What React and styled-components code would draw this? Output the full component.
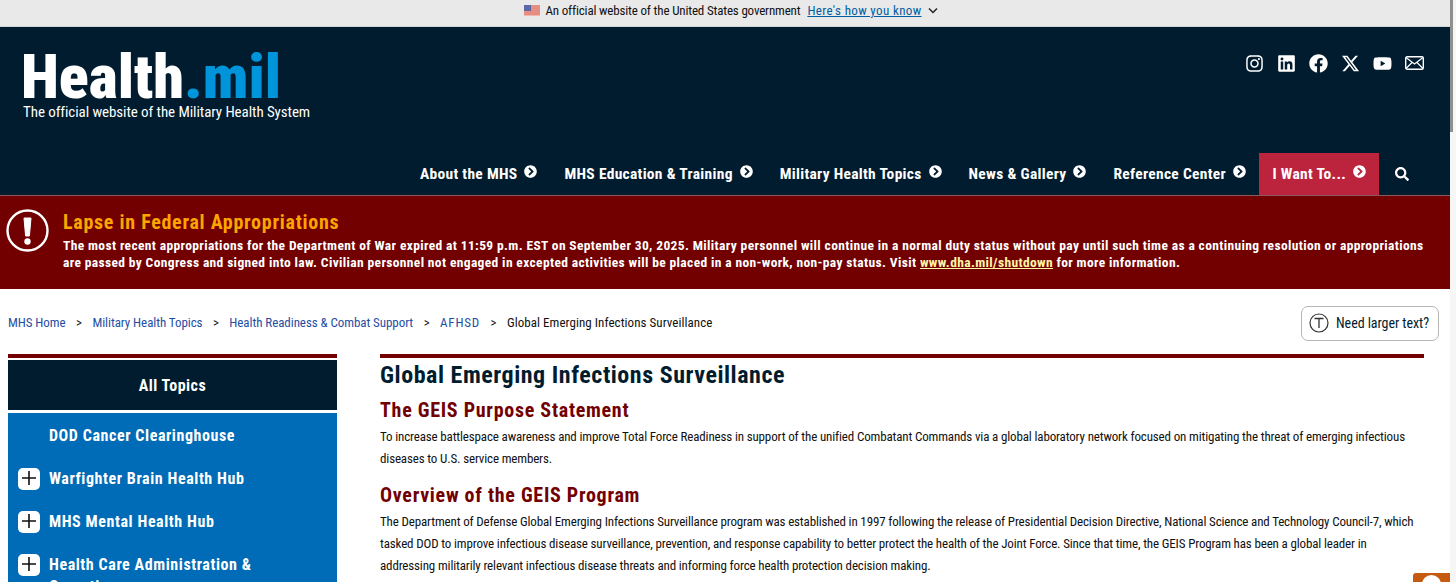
import React from "react";
import styled, { createGlobalStyle } from "styled-components";
import { FaInstagram, FaLinkedin, FaFacebook, FaYoutube, FaChevronCircleRight, FaSearch } from "react-icons/fa";
import { FaXTwitter } from "react-icons/fa6";

const GlobalStyle = createGlobalStyle`
  html, body {
    margin: 0;
    padding: 0;
    height: 582px;
    overflow: hidden;
    background: #fff;
    font-family: Roboto, "Liberation Sans", Arial, sans-serif;
    font-stretch: 75%;
  }
`;

const Page = styled.div`
  width: 1456px;
  height: 582px;
  overflow: hidden;
  position: relative;
`;

const GovBanner = styled.div`
  height: 27px;
  background: #e9e9e9;
  border-bottom: 1px solid #d4d4d4;
  box-sizing: border-box;
  display: flex;
  align-items: center;
  justify-content: center;
  font-size: 13px;
  letter-spacing: -0.17px;
  color: #111;
  padding-left: 6px;
  padding-bottom: 5px;
`;

const FlagIcon = styled.svg`
  width: 16px;
  height: 11px;
  margin-right: 5px;
`;

const GovLink = styled.a`
  color: #005ea2;
  text-decoration: underline;
  margin-left: 7px;
  letter-spacing: 0.37px;
`;

const Chevron = styled.svg`
  width: 10px;
  height: 7px;
  margin-left: 6px;
`;

const Header = styled.header`
  height: 169px;
  background: #001c2e;
  border-bottom: 1px solid #8a5a5f;
  box-sizing: border-box;
  display: flex;
  flex-direction: column;
  justify-content: space-between;
`;

const HeaderTop = styled.div`
  display: flex;
  justify-content: space-between;
  padding: 20px 32px 0 23px;
`;

const Logo = styled.div`
  display: flex;
  flex-direction: column;
  color: #fff;
`;

const LogoMark = styled.div`
  font-weight: 900;
  font-stretch: 80%;
  font-size: 62px;
  line-height: 60px;
  height: 56px;
  margin-left: -2px;
`;

const LogoDot = styled.span`
  color: #0095db;
`;

const LogoTag = styled.div`
  font-size: 15px;
  line-height: 18px;
  letter-spacing: -0.08px;
`;

const Socials = styled.div`
  display: flex;
  align-items: center;
  gap: 13px;
  color: #fff;
  font-size: 19px;
  padding-top: 6px;
  height: 20px;
`;

const MailIcon = styled.svg`
  width: 19px;
  height: 14px;
`;

const Nav = styled.nav`
  display: flex;
  justify-content: flex-end;
  align-items: stretch;
  height: 42px;
  padding-right: 47px;
`;

const NavItem = styled.a`
  display: flex;
  align-items: center;
  padding: ${(p) => (p.$active ? "0 13px 0 13px" : "0 13.5px")};
  color: #fff;
  font-weight: 700;
  font-size: 15.5px;
  letter-spacing: 0.3px;
  background: ${(p) => (p.$active ? "#bc233c" : "transparent")};
  svg {
    font-size: 13px;
    margin: -5px 0 0 7px;
  }
`;

const SearchButton = styled.span`
  display: flex;
  align-items: center;
  color: #fff;
  font-size: 14px;
  margin-left: 16px;
`;

const Alert = styled.section`
  height: 93px;
  background: #720000;
  display: flex;
  box-sizing: border-box;
  padding: 13px 28px 0 6px;
  gap: 14px;
  color: #fff;
`;

const AlertIcon = styled.svg`
  width: 43px;
  height: 43px;
  flex: none;
`;

const AlertTitle = styled.h2`
  margin: 0;
  font-size: 20px;
  line-height: 26px;
  font-weight: 700;
  letter-spacing: 0.72px;
  color: #fca400;
`;

const AlertText = styled.p`
  margin: 2px 0 0;
  font-size: 13.5px;
  line-height: 17px;
  font-weight: 700;
  letter-spacing: 0.36px;
  a {
    color: #fff7a8;
    text-decoration: underline;
  }
`;

const CrumbRow = styled.div`
  display: flex;
  align-items: center;
  height: 65px;
  padding: 0 17px 0 8px;
  font-size: 13px;
  letter-spacing: -0.07px;
  color: #111;
`;

const Crumb = styled.a`
  color: #1f4fa3;
  margin-top: 2px;
  &:last-of-type {
    letter-spacing: 0.8px;
  }
`;

const CrumbSep = styled.span`
  margin: 2px 10.5px 0;
`;

const CrumbCurrent = styled.span`
  margin-top: 2px;
  letter-spacing: 0.05px;
`;

const LargerText = styled.button`
  margin-left: auto;
  margin-top: 3px;
  display: flex;
  align-items: center;
  gap: 7px;
  width: 138px;
  height: 35px;
  padding: 0 0 0 7px;
  border: 1px solid #b5b5b5;
  border-radius: 7px;
  background: #fff;
  color: #001c2e;
  font-family: inherit;
  font-stretch: 75%;
  font-size: 14px;
  letter-spacing: -0.05px;
  white-space: nowrap;
`;

const TextSizeIcon = styled.svg`
  width: 20px;
  height: 20px;
`;

const Columns = styled.div`
  display: flex;
  padding: 0 32px 0 8px;
  gap: 43px;
`;

const Sidebar = styled.aside`
  width: 329px;
  flex: none;
  border-top: 4px solid #720000;
`;

const SideTitle = styled.div`
  margin-top: 2px;
  height: 50px;
  background: #001c2e;
  color: #fff;
  display: flex;
  align-items: center;
  justify-content: center;
  font-weight: 700;
  font-size: 16px;
  letter-spacing: 0.5px;
`;

const SideList = styled.ul`
  list-style: none;
  margin: 3px 0 0;
  padding: 0;
  background: #006bb6;
  color: #fff;
`;

const SideItem = styled.li`
  display: flex;
  align-items: flex-start;
  min-height: 43.3px;
  padding: 11.5px 12px 0 10px;
  box-sizing: border-box;
  font-weight: 700;
  font-size: 16px;
  line-height: 22px;
  letter-spacing: 0.58px;
`;

const Expander = styled.span`
  width: 22px;
  height: 22px;
  flex: none;
  margin-right: 9px;
  border-radius: 5px;
  background: ${(p) => (p.$empty ? "transparent" : "#fff")};
  display: flex;
  align-items: center;
  justify-content: center;
`;

const PlusIcon = styled.svg`
  width: 16px;
  height: 16px;
  margin-top: -2px;
`;

const Main = styled.main`
  flex: 1;
  border-top: 4px solid #720000;
`;

const PageTitle = styled.h1`
  margin: 2px 0 0;
  font-size: 24px;
  line-height: 30px;
  font-weight: 700;
  letter-spacing: 0.54px;
  color: #001c2e;
`;

const SectionTitle = styled.h2`
  margin: ${(p) => (p.$first ? "7px" : "12px")} 0 0;
  font-size: 20px;
  line-height: 26px;
  font-weight: 700;
  letter-spacing: 0.72px;
  color: #720000;
`;

const Body = styled.p`
  margin: 3px 0 0;
  font-size: 13px;
  line-height: 22px;
  letter-spacing: -0.15px;
  color: #111;
`;

const ScrollTrack = styled.div`
  position: absolute;
  top: 0;
  right: 0;
  width: 6px;
  height: 582px;
  background: #f6f6f6;
  &::before {
    content: "";
    position: absolute;
    top: 0;
    left: 0;
    width: 3px;
    height: 132px;
    background: #8f8f8f;
  }
`;

const HelpWidget = styled.div`
  position: absolute;
  right: 6px;
  bottom: 0;
  width: 37px;
  height: 9px;
  background: #c65a11;
  border-radius: 3px 0 0 0;
  overflow: hidden;
  &::after {
    content: "";
    position: absolute;
    left: 9px;
    top: 2px;
    width: 19px;
    height: 19px;
    border-radius: 50%;
    background: #fff;
  }
`;

const navItems = [
  "About the MHS",
  "MHS Education & Training",
  "Military Health Topics",
  "News & Gallery",
  "Reference Center",
];

const crumbs = ["MHS Home", "Military Health Topics", "Health Readiness & Combat Support", "AFHSD"];

const Plus = () => (
  <PlusIcon viewBox="0 0 16 16">
    <path d="M8 1v14M1 8h14" fill="none" stroke="#111" strokeWidth="1.6" />
  </PlusIcon>
);

const App = () => {
  return (
    <Page>
      <GlobalStyle />
      <GovBanner>
        <FlagIcon viewBox="0 0 16 11">
          <rect width="16" height="11" fill="#f3b7ad" />
          <path d="M0 1h16M0 3h16M0 5h16M0 7h16M0 9h16" stroke="#d9655a" strokeWidth="1" />
          <rect width="7" height="6" fill="#5a68a8" />
        </FlagIcon>
        An official website of the United States government
        <GovLink>Here's how you know</GovLink>
        <Chevron viewBox="0 0 10 7">
          <path d="M1 1.5l4 4 4-4" fill="none" stroke="#222" strokeWidth="1.5" />
        </Chevron>
      </GovBanner>
      <Header>
        <HeaderTop>
          <Logo>
            <LogoMark>
              Health<LogoDot>.mil</LogoDot>
            </LogoMark>
            <LogoTag>The official website of the Military Health System</LogoTag>
          </Logo>
          <Socials>
            <FaInstagram />
            <FaLinkedin />
            <FaFacebook />
            <FaXTwitter />
            <FaYoutube />
            <MailIcon viewBox="0 0 19 14">
              <rect x="0.7" y="0.7" width="17.6" height="12.6" rx="1.5" fill="none" stroke="#fff" strokeWidth="1.4" />
              <path d="M1 1.5l8.5 6.5 8.5-6.5M1 12.5l6-6M18 12.5l-6-6" fill="none" stroke="#fff" strokeWidth="1.2" />
            </MailIcon>
          </Socials>
        </HeaderTop>
        <Nav>
          {navItems.map((item) => (
            <NavItem key={item}>
              {item}
              <FaChevronCircleRight />
            </NavItem>
          ))}
          <NavItem $active>
            I Want To...
            <FaChevronCircleRight />
          </NavItem>
          <SearchButton>
            <FaSearch />
          </SearchButton>
        </Nav>
      </Header>
      <Alert>
        <AlertIcon viewBox="0 0 43 43">
          <circle cx="21.5" cy="21.5" r="20" fill="none" stroke="#fff" strokeWidth="2.4" />
          <path d="M18 9h7l-1.6 18h-3.8z" fill="#fff" stroke="#fff" strokeLinejoin="round" />
          <circle cx="21.5" cy="32.5" r="3.2" fill="#fff" />
        </AlertIcon>
        <div>
          <AlertTitle>Lapse in Federal Appropriations</AlertTitle>
          <AlertText>
            The most recent appropriations for the Department of War expired at 11:59 p.m. EST on September 30, 2025. Military personnel will continue in a normal duty status without pay until such time as a continuing resolution or appropriations are passed by Congress and signed into law. Civilian personnel not engaged in excepted activities will be placed in a non-work, non-pay status. Visit <a>www.dha.mil/shutdown</a> for more information.
          </AlertText>
        </div>
      </Alert>
      <CrumbRow>
        {crumbs.map((c) => (
          <React.Fragment key={c}>
            <Crumb>{c}</Crumb>
            <CrumbSep>&gt;</CrumbSep>
          </React.Fragment>
        ))}
        <CrumbCurrent>Global Emerging Infections Surveillance</CrumbCurrent>
        <LargerText>
          <TextSizeIcon viewBox="0 0 20 20">
            <circle cx="10" cy="10" r="9" fill="none" stroke="#333" strokeWidth="1.2" />
            <path d="M5.5 5.5h9M10 5.5V15" fill="none" stroke="#333" strokeWidth="1.3" />
          </TextSizeIcon>
          Need larger text?
        </LargerText>
      </CrumbRow>
      <Columns>
        <Sidebar>
          <SideTitle>All Topics</SideTitle>
          <SideList>
            <SideItem>
              <Expander $empty />
              DOD Cancer Clearinghouse
            </SideItem>
            <SideItem>
              <Expander><Plus /></Expander>
              Warfighter Brain Health Hub
            </SideItem>
            <SideItem>
              <Expander><Plus /></Expander>
              MHS Mental Health Hub
            </SideItem>
            <SideItem>
              <Expander><Plus /></Expander>
              Health Care Administration & Operations
            </SideItem>
          </SideList>
        </Sidebar>
        <Main>
          <PageTitle>Global Emerging Infections Surveillance</PageTitle>
          <SectionTitle $first>The GEIS Purpose Statement</SectionTitle>
          <Body>
            To increase battlespace awareness and improve Total Force Readiness in support of the unified Combatant Commands via a global laboratory network focused on mitigating the threat of emerging infectious diseases to U.S. service members.
          </Body>
          <SectionTitle>Overview of the GEIS Program</SectionTitle>
          <Body>
            The Department of Defense Global Emerging Infections Surveillance program was established in 1997 following the release of Presidential Decision Directive, National Science and Technology Council-7, which tasked DOD to improve infectious disease surveillance, prevention, and response capability to better protect the health of the Joint Force. Since that time, the GEIS Program has been a global leader in addressing militarily relevant infectious disease threats and informing force health protection decision making.
          </Body>
        </Main>
      </Columns>
      <ScrollTrack />
      <HelpWidget />
    </Page>
  );
};

export default App;
